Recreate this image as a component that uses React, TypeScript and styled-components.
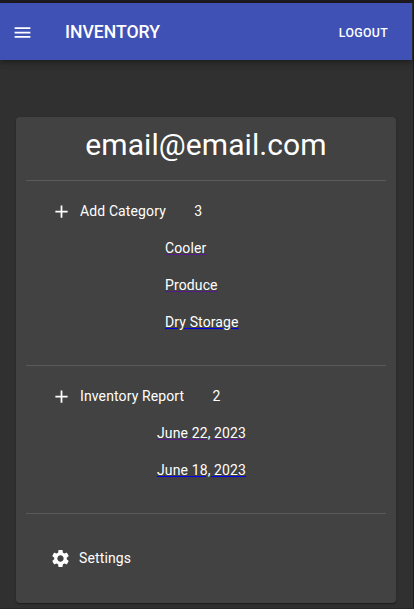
import React from 'react';
import styled, { createGlobalStyle } from 'styled-components';

const Global = createGlobalStyle`
  * { box-sizing: border-box; }
  body { margin: 0; background: #303030; color: #fff; font-family: Roboto, sans-serif; font-size: 14px; overflow: hidden; }
`;
const Page = styled.div`
  height: 609px;
  border-top: 3px solid #1d1b20;
  border-right: 1px solid #1d1b20;
  border-bottom: 1px solid #292426;
  display: flex;
  flex-direction: column;
`;
const AppBar = styled.header`
  height: 57px;
  width: 412px;
  flex: none;
  display: flex;
  align-items: center;
  padding: 1px 24px 0 12px;
  background: #3f51b5;
  box-shadow: 0 2px 4px -1px rgba(0,0,0,.2), 0 4px 5px rgba(0,0,0,.14), 0 1px 10px rgba(0,0,0,.12);
`;
const Icon = styled.svg<{ $size: number }>`
  width: ${p => p.$size}px;
  height: ${p => p.$size}px;
  fill: #fff;
  flex: none;
`;
const Title = styled.h1`
  flex: 1;
  margin: 0 0 0 32px;
  font-size: 17.6px;
  font-weight: 500;
  line-height: 28px;
`;
const Logout = styled.button`
  border: 0;
  padding: 2px 0 0;
  background: none;
  color: #fff;
  font: 500 12.3px/22px Roboto, sans-serif;
  letter-spacing: .35px;
`;
const Card = styled.main`
  width: 380px;
  height: 486px;
  margin: 57px 0 0 16px;
  padding: 0 10px;
  flex: none;
  border-radius: 4px;
  background: #424242;
  box-shadow: 0 2px 1px -1px rgba(0,0,0,.2), 0 1px 1px rgba(0,0,0,.14), 0 1px 3px rgba(0,0,0,.12);
`;
const Email = styled.h2`
  margin: 0;
  height: 63px;
  padding-top: 7px;
  font-size: 30px;
  font-weight: 400;
  letter-spacing: .08px;
  line-height: 42px;
  text-align: center;
`;
const Section = styled.section<{ $height: number; $top: number }>`
  height: ${p => p.$height}px;
  padding-top: ${p => p.$top}px;
  border-top: 1px solid #5a5a5a;
`;
const Row = styled.div<{ $left: number; $gap: number }>`
  height: 37px;
  display: flex;
  align-items: center;
  padding-left: ${p => p.$left}px;
  gap: ${p => p.$gap}px;
  letter-spacing: .12px;
`;
const Label = styled.span`
  padding-bottom: 2px;
`;
const Count = styled(Label)`
  margin-left: 20.3px;
`;
const Item = styled.div<{ $left: number }>`
  height: 37px;
  padding-left: ${p => p.$left}px;
  line-height: 37px;
  letter-spacing: .12px;
`;
const ItemLink = styled.a<{ $visited: boolean }>`
  text-decoration: underline ${p => (p.$visited ? '#551a8b' : '#0000ee')};
`;

const PLUS = 'M19 13h-6v6h-2v-6H5v-2h6V5h2v6h6v2z';
const MENU = 'M3 18h18v-2H3v2zm0-5h18v-2H3v2zm0-7v2h18V6H3z';
const GEAR = 'M19.14 12.94c.04-.3.06-.61.06-.94 0-.32-.02-.64-.07-.94l2.03-1.58c.18-.14.23-.41.12-.61l-1.92-3.32c-.12-.22-.37-.29-.59-.22l-2.39.96c-.5-.38-1.03-.7-1.62-.94l-.36-2.54c-.04-.24-.24-.41-.48-.41h-3.84c-.24 0-.43.17-.47.41l-.36 2.54c-.59.24-1.13.57-1.62.94l-2.39-.96c-.22-.08-.47 0-.59.22L2.74 8.87c-.12.21-.08.47.12.61l2.03 1.58c-.05.3-.09.63-.09.94s.02.64.07.94l-2.03 1.58c-.18.14-.23.41-.12.61l1.92 3.32c.12.22.37.29.59.22l2.39-.96c.5.38 1.03.7 1.62.94l.36 2.54c.05.24.24.41.48.41h3.84c.24 0 .44-.17.47-.41l.36-2.54c.59-.24 1.13-.56 1.62-.94l2.39.96c.22.08.47 0 .59-.22l1.92-3.32c.12-.22.07-.47-.12-.61l-2.01-1.58zM12 15.6c-1.98 0-3.6-1.62-3.6-3.6s1.62-3.6 3.6-3.6 3.6 1.62 3.6 3.6-1.62 3.6-3.6 3.6z';

const Glyph = ({ d, size }: { d: string; size: number }) => (
  <Icon $size={size} viewBox="0 0 24 24"><path d={d} /></Icon>
);

type Entry = { text: string; visited: boolean };

const ListSection = ({ title, count, left, entries, height }: { title: string; count: number; left: number; entries: Entry[]; height: number }) => (
  <Section $height={height} $top={12}>
    <Row $left={25} $gap={8}>
      <Glyph d={PLUS} size={21} />
      <Label>{title}</Label>
      <Count>{count}</Count>
    </Row>
    {entries.map(e => (
      <Item key={e.text} $left={left}><ItemLink $visited={e.visited}>{e.text}</ItemLink></Item>
    ))}
  </Section>
);

export default function App() {
  return (
    <>
      <Global />
      <Page>
        <AppBar>
          <Glyph d={MENU} size={21} />
          <Title>INVENTORY</Title>
          <Logout>LOGOUT</Logout>
        </AppBar>
        <Card>
          <Email>email@email.com</Email>
          <ListSection title="Add Category" count={3} left={139} height={185} entries={[
            { text: 'Cooler', visited: true },
            { text: 'Produce', visited: true },
            { text: 'Dry Storage', visited: false },
          ]} />
          <ListSection title="Inventory Report" count={2} left={131} height={148} entries={[
            { text: 'June 22, 2023', visited: true },
            { text: 'June 18, 2023', visited: false },
          ]} />
          <Section $height={89} $top={26}>
            <Row $left={24} $gap={8}>
              <Glyph d={GEAR} size={21} />
              <Label>Settings</Label>
            </Row>
          </Section>
        </Card>
      </Page>
    </>
  );
}
